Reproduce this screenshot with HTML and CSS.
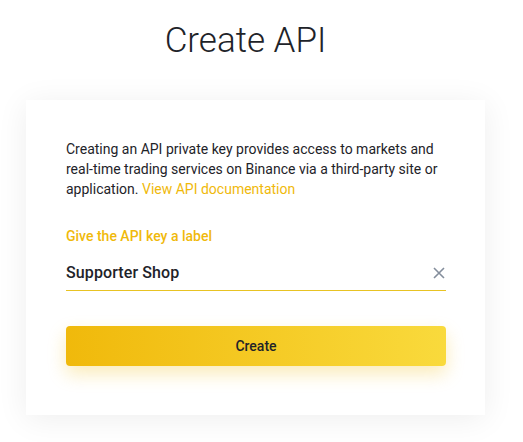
FILE: index.html
```html
<!DOCTYPE html>
<html lang="en">
<head>
<meta charset="utf-8">
<title>Create API</title>
<link rel="stylesheet" href="styles.css">
</head>
<body>
<div class="page">
  <h1 class="title">Create API</h1>
  <div class="card">
    <p class="intro">Creating an API private key provides access to markets and real-time trading services on Binance via a third-party site or application. <a class="link" href="#">View API documentation</a></p>
    <label class="label" for="apiLabel">Give the API key a label</label>
    <div class="field">
      <input id="apiLabel" class="input" type="text" value="Supporter Shop">
      <button class="clear" type="button" aria-label="Clear">
        <svg width="12" height="12" viewBox="0 0 12 12"><path d="M1 1L11 11M11 1L1 11" stroke="#848e9c" stroke-width="1.6" fill="none"/></svg>
      </button>
    </div>
    <button class="create" type="button">Create</button>
  </div>
</div>
</body>
</html>
```
FILE: styles.css
```css
* { box-sizing: border-box; }
html, body { margin: 0; padding: 0; background: #ffffff; }
body { font-family: Roboto, "Noto Sans", sans-serif; color: #1e2329; }
.page { width: 523px; height: 442px; overflow: hidden; }
.title {
  width: 491px;
  margin: 0;
  padding-top: 19px;
  height: 100px;
  text-align: center;
  font-weight: 300;
  font-size: 35px;
  line-height: 44px;
  color: #1e2329;
}
.card {
  margin-left: 26px;
  width: 459px;
  height: 315px;
  background: #fff;
  box-shadow: 0 4px 30px rgba(0, 0, 0, 0.07);
  padding: 39px 39px 0 40px;
  display: flex;
  flex-direction: column;
}
.intro {
  margin: 0;
  font-size: 14px;
  line-height: 20px;
  color: #1e2329;
}
.link { color: #f0b90b; text-decoration: none; }
.label {
  margin-top: 27px;
  font-size: 14px;
  line-height: 20px;
  font-weight: 500;
  color: #f0b90b;
}
.field {
  margin-top: 5px;
  height: 40px;
  padding-top: 4px;
  display: flex;
  align-items: center;
  border-bottom: 1px solid #e8c323;
}
.input {
  flex: 1;
  border: 0;
  outline: 0;
  padding: 0;
  font-family: inherit;
  font-size: 16px;
  font-weight: 500;
  letter-spacing: 0.1px;
  color: #1e2329;
  background: transparent;
}
.clear {
  border: 0;
  background: transparent;
  padding: 0;
  width: 14px;
  height: 14px;
  display: flex;
  align-items: center;
  justify-content: center;
  margin-right: 0;
}
.create {
  margin-top: 35px;
  height: 40px;
  border: 0;
  border-radius: 4px;
  background: linear-gradient(90deg, #f0b90b 0%, #f9da3c 100%);
  box-shadow: 0 8px 18px rgba(240, 185, 11, 0.28);
  font-family: inherit;
  font-size: 14px;
  font-weight: 500;
  color: #1e2329;
}
```
